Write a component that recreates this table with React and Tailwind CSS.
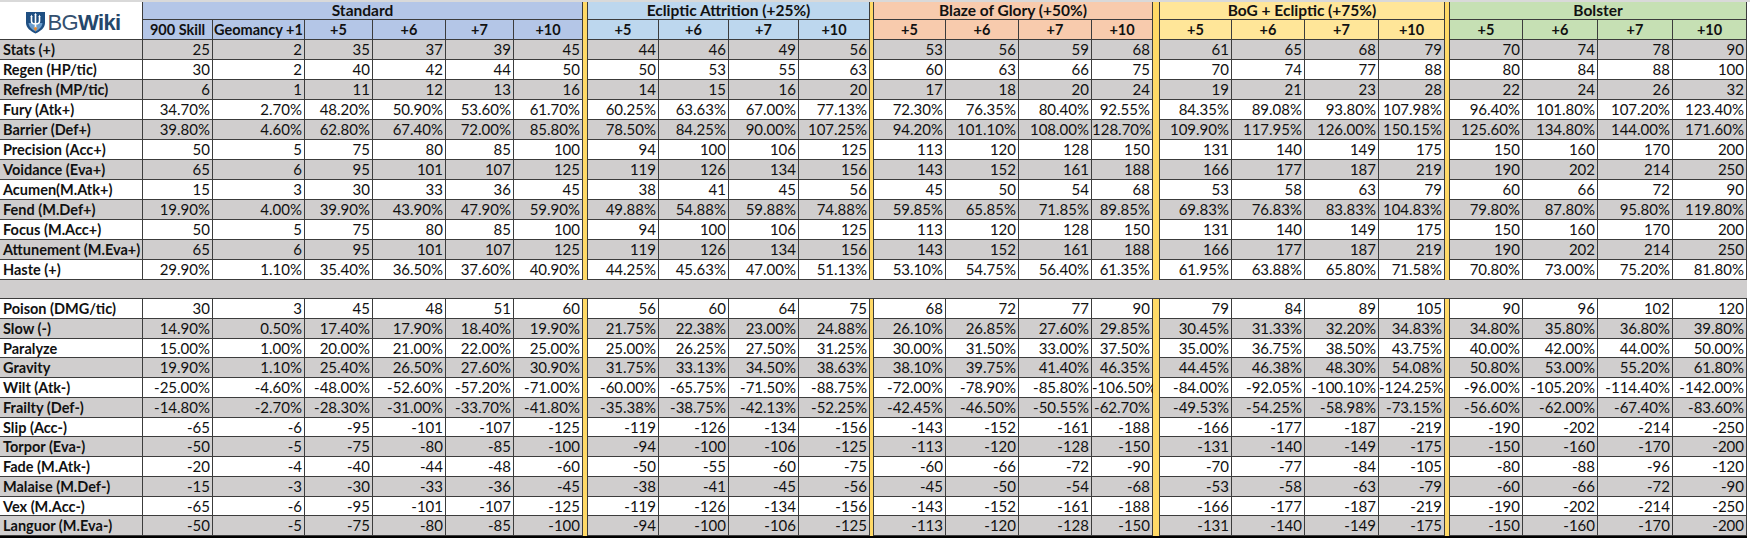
import React from 'react'

const GROUPS = [
  { name: 'Standard', bg: 'bg-[#b4c6e7]', span: 'col-span-6', cols: ['900 Skill', 'Geomancy +1', '+5', '+6', '+7', '+10'] },
  { name: 'Ecliptic Attrition (+25%)', bg: 'bg-[#bdd7ee]', span: 'col-span-4', cols: ['+5', '+6', '+7', '+10'] },
  { name: 'Blaze of Glory (+50%)', bg: 'bg-[#f8cbad]', span: 'col-span-4', cols: ['+5', '+6', '+7', '+10'] },
  { name: 'BoG + Ecliptic (+75%)', bg: 'bg-[#ffe699]', span: 'col-span-4', cols: ['+5', '+6', '+7', '+10'] },
  { name: 'Bolster', bg: 'bg-[#c6e0b4]', span: 'col-span-4', cols: ['+5', '+6', '+7', '+10'] },
]

const BUFFS = [
  ['Stats (+)', '25 2 35 37 39 45 44 46 49 56 53 56 59 68 61 65 68 79 70 74 78 90'],
  ['Regen (HP/tic)', '30 2 40 42 44 50 50 53 55 63 60 63 66 75 70 74 77 88 80 84 88 100'],
  ['Refresh (MP/tic)', '6 1 11 12 13 16 14 15 16 20 17 18 20 24 19 21 23 28 22 24 26 32'],
  ['Fury (Atk+)', '34.70% 2.70% 48.20% 50.90% 53.60% 61.70% 60.25% 63.63% 67.00% 77.13% 72.30% 76.35% 80.40% 92.55% 84.35% 89.08% 93.80% 107.98% 96.40% 101.80% 107.20% 123.40%'],
  ['Barrier (Def+)', '39.80% 4.60% 62.80% 67.40% 72.00% 85.80% 78.50% 84.25% 90.00% 107.25% 94.20% 101.10% 108.00% 128.70% 109.90% 117.95% 126.00% 150.15% 125.60% 134.80% 144.00% 171.60%'],
  ['Precision (Acc+)', '50 5 75 80 85 100 94 100 106 125 113 120 128 150 131 140 149 175 150 160 170 200'],
  ['Voidance (Eva+)', '65 6 95 101 107 125 119 126 134 156 143 152 161 188 166 177 187 219 190 202 214 250'],
  ['Acumen(M.Atk+)', '15 3 30 33 36 45 38 41 45 56 45 50 54 68 53 58 63 79 60 66 72 90'],
  ['Fend (M.Def+)', '19.90% 4.00% 39.90% 43.90% 47.90% 59.90% 49.88% 54.88% 59.88% 74.88% 59.85% 65.85% 71.85% 89.85% 69.83% 76.83% 83.83% 104.83% 79.80% 87.80% 95.80% 119.80%'],
  ['Focus (M.Acc+)', '50 5 75 80 85 100 94 100 106 125 113 120 128 150 131 140 149 175 150 160 170 200'],
  ['Attunement (M.Eva+)', '65 6 95 101 107 125 119 126 134 156 143 152 161 188 166 177 187 219 190 202 214 250'],
  ['Haste (+)', '29.90% 1.10% 35.40% 36.50% 37.60% 40.90% 44.25% 45.63% 47.00% 51.13% 53.10% 54.75% 56.40% 61.35% 61.95% 63.88% 65.80% 71.58% 70.80% 73.00% 75.20% 81.80%'],
]

const DEBUFFS = [
  ['Poison (DMG/tic)', '30 3 45 48 51 60 56 60 64 75 68 72 77 90 79 84 89 105 90 96 102 120'],
  ['Slow (-)', '14.90% 0.50% 17.40% 17.90% 18.40% 19.90% 21.75% 22.38% 23.00% 24.88% 26.10% 26.85% 27.60% 29.85% 30.45% 31.33% 32.20% 34.83% 34.80% 35.80% 36.80% 39.80%'],
  ['Paralyze', '15.00% 1.00% 20.00% 21.00% 22.00% 25.00% 25.00% 26.25% 27.50% 31.25% 30.00% 31.50% 33.00% 37.50% 35.00% 36.75% 38.50% 43.75% 40.00% 42.00% 44.00% 50.00%'],
  ['Gravity', '19.90% 1.10% 25.40% 26.50% 27.60% 30.90% 31.75% 33.13% 34.50% 38.63% 38.10% 39.75% 41.40% 46.35% 44.45% 46.38% 48.30% 54.08% 50.80% 53.00% 55.20% 61.80%'],
  ['Wilt (Atk-)', '-25.00% -4.60% -48.00% -52.60% -57.20% -71.00% -60.00% -65.75% -71.50% -88.75% -72.00% -78.90% -85.80% -106.50% -84.00% -92.05% -100.10% -124.25% -96.00% -105.20% -114.40% -142.00%'],
  ['Frailty (Def-)', '-14.80% -2.70% -28.30% -31.00% -33.70% -41.80% -35.38% -38.75% -42.13% -52.25% -42.45% -46.50% -50.55% -62.70% -49.53% -54.25% -58.98% -73.15% -56.60% -62.00% -67.40% -83.60%'],
  ['Slip (Acc-)', '-65 -6 -95 -101 -107 -125 -119 -126 -134 -156 -143 -152 -161 -188 -166 -177 -187 -219 -190 -202 -214 -250'],
  ['Torpor (Eva-)', '-50 -5 -75 -80 -85 -100 -94 -100 -106 -125 -113 -120 -128 -150 -131 -140 -149 -175 -150 -160 -170 -200'],
  ['Fade (M.Atk-)', '-20 -4 -40 -44 -48 -60 -50 -55 -60 -75 -60 -66 -72 -90 -70 -77 -84 -105 -80 -88 -96 -120'],
  ['Malaise (M.Def-)', '-15 -3 -30 -33 -36 -45 -38 -41 -45 -56 -45 -50 -54 -68 -53 -58 -63 -79 -60 -66 -72 -90'],
  ['Vex (M.Acc-)', '-65 -6 -95 -101 -107 -125 -119 -126 -134 -156 -143 -152 -161 -188 -166 -177 -187 -219 -190 -202 -214 -250'],
  ['Languor (M.Eva-)', '-50 -5 -75 -80 -85 -100 -94 -100 -106 -125 -113 -120 -128 -150 -131 -140 -149 -175 -150 -160 -170 -200'],
]

// where a yellow divider goes, counted in value columns
const SPLITS = [6, 10, 14, 18]

const Sep = () => <div className="bg-[#ffd966] border-r border-[#3c3c3c]" />

const Logo = () => (
  <div className="row-span-2 bg-white border-r border-b border-[#3c3c3c] flex items-center justify-center pt-[4px] pl-[4px]">
    <svg width="21" height="23" viewBox="0 0 21 23" className="mr-[1px]">
      <path d="M1 1 H20 V12 C20 17 15 20.5 10.5 22.5 C6 20.5 1 17 1 12 Z" fill="#1f4f82" />
      <path d="M3.5 12 C4 16 7 18.5 10.5 20.5 C14 18.5 17 16 17.5 12 Z" fill="#6b9ccc" />
      <path d="M10.5 3 V17 M6.5 5 V10 C6.5 12 8 13 10.5 13 C13 13 14.5 12 14.5 10 V5" stroke="#fff" strokeWidth="1.6" fill="none" />
      <path d="M5.5 6 L6.5 3.5 L7.5 6 Z M9.5 4 L10.5 1.8 L11.5 4 Z M13.5 6 L14.5 3.5 L15.5 6 Z" fill="#fff" />
      <path d="M8.5 16 C9 18 10 19 10.5 20.5 C11 19 12 18 12.5 16 C11.5 17 11 17 10.5 15.5 C10 17 9.5 17 8.5 16 Z" fill="#f08a24" />
    </svg>
    <span className="font-['Liberation_Sans',sans-serif] text-[22px] leading-none tracking-[-0.6px] text-[#34506f]">
      BG<span className="font-bold text-[#25476b]">Wiki</span>
    </span>
  </div>
)

const Row = ({ label, values, gray }) => {
  const vals = values.split(' ')
  const bg = gray ? 'bg-[#d0cece]' : 'bg-white'
  const cells = []
  vals.forEach((v, i) => {
    if (SPLITS.includes(i)) cells.push(<Sep key={'s' + i} />)
    cells.push(
      <div key={i} className={`${bg} border-r border-b border-[#3c3c3c] text-right pr-[2px] text-[15px] leading-[19px] whitespace-nowrap`}>
        {v}
      </div>
    )
  })
  return (
    <>
      <div className={`${bg} border-r border-b border-[#3c3c3c] font-bold text-[14.5px] pl-[3px] leading-[19px] whitespace-nowrap`}>
        {label}
      </div>
      {cells}
    </>
  )
}

const App = () => {
  return (
    <div className="w-[1750px] h-[538px] bg-white text-[#111] font-['Lato','Liberation_Sans',sans-serif] overflow-hidden">
      <div className="h-[2px] bg-[#d9d9d9]" />
      <div className="w-[1747px] border-b-[3px] border-black grid grid-cols-[143px_70px_92px_68px_73px_68px_69px_5px_71px_70px_70px_71px_4px_72px_73px_73px_61px_7px_72px_73px_74px_66px_5px_73px_75px_75px_74px] grid-rows-[18px_20px_repeat(12,20px)_19px_repeat(12,19.75px)]">
        <Logo />
        {GROUPS.map((g, gi) => (
          <React.Fragment key={g.name}>
            {gi > 0 && <div className="row-span-2 bg-[#ffd966] border-r border-[#3c3c3c]" />}
            <div className={`${g.span} ${g.bg} border-r border-b border-[#3c3c3c] text-center font-bold text-[15.5px] leading-[17px]`}>
              {g.name}
            </div>
          </React.Fragment>
        ))}
        {GROUPS.map((g) => (
          <React.Fragment key={g.name + 'cols'}>
            {g.cols.map((c, ci) => (
              <div key={ci} className={`${g.bg} border-r border-b border-[#3c3c3c] text-center font-bold text-[14.5px] leading-[19px] whitespace-nowrap`}>
                {c}
              </div>
            ))}
          </React.Fragment>
        ))}
        {BUFFS.map(([label, values], i) => (
          <Row key={label} label={label} values={values} gray={i % 2 === 0} />
        ))}
        <div className="col-span-full bg-[#d0cece] border-b border-[#3c3c3c]" />
        {DEBUFFS.map(([label, values], i) => (
          <Row key={label} label={label} values={values} gray={i % 2 === 1} />
        ))}
      </div>
    </div>
  )
}

export default App
